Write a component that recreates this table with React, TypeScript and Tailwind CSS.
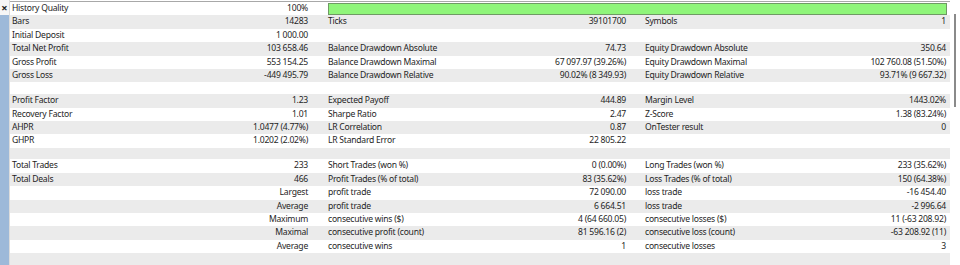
import React from "react";

type Row = [string, string, string, string, string, string];

const rows: Row[] = [
  ["Bars", "14283", "Ticks", "39101700", "Symbols", "1"],
  ["Initial Deposit", "1 000.00", "", "", "", ""],
  ["Total Net Profit", "103 658.46", "Balance Drawdown Absolute", "74.73", "Equity Drawdown Absolute", "350.64"],
  ["Gross Profit", "553 154.25", "Balance Drawdown Maximal", "67 097.97 (39.26%)", "Equity Drawdown Maximal", "102 760.08 (51.50%)"],
  ["Gross Loss", "-449 495.79", "Balance Drawdown Relative", "90.02% (8 349.93)", "Equity Drawdown Relative", "93.71% (9 667.32)"],
  ["", "", "", "", "", ""],
  ["Profit Factor", "1.23", "Expected Payoff", "444.89", "Margin Level", "1443.02%"],
  ["Recovery Factor", "1.01", "Sharpe Ratio", "2.47", "Z-Score", "1.38 (83.24%)"],
  ["AHPR", "1.0477 (4.77%)", "LR Correlation", "0.87", "OnTester result", "0"],
  ["GHPR", "1.0202 (2.02%)", "LR Standard Error", "22 805.22", "", ""],
  ["", "", "", "", "", ""],
  ["Total Trades", "233", "Short Trades (won %)", "0 (0.00%)", "Long Trades (won %)", "233 (35.62%)"],
  ["Total Deals", "466", "Profit Trades (% of total)", "83 (35.62%)", "Loss Trades (% of total)", "150 (64.38%)"],
  ["", "Largest", "profit trade", "72 090.00", "loss trade", "-16 454.40"],
  ["", "Average", "profit trade", "6 664.51", "loss trade", "-2 996.64"],
  ["", "Maximum", "consecutive wins ($)", "4 (64 660.05)", "consecutive losses ($)", "11 (-63 208.92)"],
  ["", "Maximal", "consecutive profit (count)", "81 596.16 (2)", "consecutive loss (count)", "-63 208.92 (11)"],
  ["", "Average", "consecutive wins", "1", "consecutive losses", "3"],
  ["", "", "", "", "", ""],
];

function Cells({ r }: { r: Row }) {
  return (
    <>
      <div className="w-[310px] flex justify-between pl-[2px] pr-[12px]">
        <span>{r[0]}</span>
        <span>{r[1]}</span>
      </div>
      <div className="w-[317px] flex justify-between pl-[8px] pr-[11px]">
        <span>{r[2]}</span>
        <span>{r[3]}</span>
      </div>
      <div className="w-[313px] flex justify-between pl-[8px] pr-[4px]">
        <span>{r[4]}</span>
        <span>{r[5]}</span>
      </div>
    </>
  );
}

export default function App() {
  return (
    <div
      className="w-[960px] h-[265px] overflow-hidden bg-white flex text-[#1e1e1e] text-[8.6px] tracking-[-0.25px] leading-[13.4px]"
      style={{ fontFamily: '"Noto Sans", "Open Sans", sans-serif' }}
    >
      <div className="w-[9px] flex flex-col shrink-0">
        <div className="h-[15px] bg-[#f6f6f6] flex items-center justify-center text-[11px] font-bold text-[#222] leading-none tracking-normal">
          ×
        </div>
        <div className="flex-1 bg-[#9db9d9]" />
      </div>
      <div className="w-[1px] bg-[#dcdcdc] shrink-0" />
      <div className="w-[940px] flex flex-col shrink-0 pt-[1px]">
        <div className="border-t border-[#a8a8a8]" />
        <div className="h-[13.4px] flex bg-white">
          <div className="w-[310px] flex justify-between pl-[2px] pr-[12px]">
            <span>History Quality</span>
            <span>100%</span>
          </div>
          <div className="flex-1 pl-[8px] pr-[3px] pt-[1px]">
            <div className="h-[12px] bg-[#8ff57a] border border-[#6f9a64]" />
          </div>
        </div>
        {rows.map((r, i) => (
          <div
            key={i}
            className={`h-[13.4px] flex ${i % 2 === 0 ? "bg-[#ebebeb]" : "bg-white"}`}
          >
            <Cells r={r} />
          </div>
        ))}
      </div>
      <div className="flex-1 bg-white pt-[14px] pl-[4px]">
        <div className="w-[2px] h-[93px] bg-[#8a8a8a]" />
      </div>
    </div>
  );
}
